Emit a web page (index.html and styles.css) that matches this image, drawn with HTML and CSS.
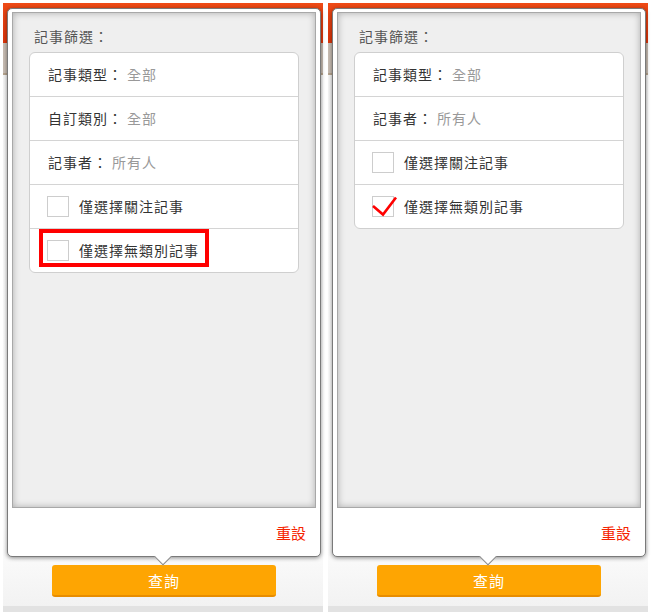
FILE: index.html
```html
<!DOCTYPE html>
<html lang="zh-Hant">
<head>
<meta charset="utf-8">
<link rel="stylesheet" href="styles.css">
</head>
<body>
<div class="pair">
  <div class="screen">
    <div class="hdr"></div>
    <div class="sub"></div>
    <div class="main"><button class="btn">查詢</button></div>
    <div class="strip"></div>
    <div class="popup">
      <div class="inner">
        <div class="title">記事篩選：</div>
        <div class="card">
          <div class="row"><span class="lbl">記事類型：</span><span class="val">全部</span></div>
          <div class="row"><span class="lbl">自訂類別：</span><span class="val">全部</span></div>
          <div class="row"><span class="lbl">記事者：</span><span class="val">所有人</span></div>
          <div class="row chk"><span class="box"></span><span class="lbl">僅選擇關注記事</span></div>
          <div class="row chk"><span class="box"></span><span class="lbl">僅選擇無類別記事</span><span class="mark"></span></div>
        </div>
      </div>
      <div class="pfoot"><span class="reset">重設</span></div>
    </div>
  </div>
  <div class="screen">
    <div class="hdr"></div>
    <div class="sub"></div>
    <div class="main"><button class="btn">查詢</button></div>
    <div class="strip"></div>
    <div class="popup">
      <div class="inner">
        <div class="title">記事篩選：</div>
        <div class="card">
          <div class="row"><span class="lbl">記事類型：</span><span class="val">全部</span></div>
          <div class="row"><span class="lbl">記事者：</span><span class="val">所有人</span></div>
          <div class="row chk"><span class="box"></span><span class="lbl">僅選擇關注記事</span></div>
          <div class="row chk"><span class="box checked"><svg class="tick" width="28" height="24" viewBox="0 0 28 24"><polyline points="1,10 11,18.5 24,1.5" fill="none" stroke="#f00" stroke-width="2.6" stroke-linejoin="miter" stroke-linecap="butt"/></svg></span><span class="lbl">僅選擇無類別記事</span></div>
        </div>
      </div>
      <div class="pfoot"><span class="reset">重設</span></div>
    </div>
  </div>
</div>
</body>
</html>
```

FILE: styles.css
```css
* { box-sizing: border-box; }
html, body { margin: 0; padding: 0; background: #fff; }
body {
  width: 659px;
  height: 612px;
  overflow: hidden;
  font-family: "Noto Sans CJK TC", "Noto Sans", sans-serif;
}
.pair {
  display: flex;
  gap: 5px;
  padding: 3px 0 0 3px;
}
.screen {
  position: relative;
  width: 320px;
  height: 609px;
  display: flex;
  flex-direction: column;
  background: linear-gradient(to right, #e6e6e6 0, #fbfbfb 5px, #fbfbfb 315px, #e6e6e6 320px);
}
.hdr {
  height: 40px;
  background: linear-gradient(#ee4a16, #dc340a);
}
.sub {
  height: 32px;
  background: #c9beb4;
  border-bottom: 2px solid #b7a58f;
}
.main {
  flex: 1;
  display: flex;
  flex-direction: column;
  justify-content: flex-end;
  align-items: center;
  padding-bottom: 9px;
  background: linear-gradient(#f6f6f6, #ffffff 85%, #f2f2f2);
}
.strip {
  height: 6px;
  background: #e2e2e2;
}
.btn {
  width: 224px;
  height: 32px;
  margin-left: 2px;
  border: 0;
  border-bottom: 2px solid #e88d00;
  border-radius: 3px;
  background: #fea502;
  color: #fff;
  font-family: inherit;
  font-size: 15px;
  letter-spacing: 1px;
  padding: 0;
}
.popup {
  position: absolute;
  top: 5px;
  left: 4px;
  width: 314px;
  height: 549px;
  display: flex;
  flex-direction: column;
  background: #fff;
  border: 1px solid #7a7a7a;
  border-radius: 5px;
  box-shadow: 0 1px 4px rgba(0,0,0,0.45);
  padding: 3px 4px 0;
}
.popup::after {
  content: "";
  position: absolute;
  left: 149px;
  bottom: -7px;
  width: 11px;
  height: 11px;
  background: #fff;
  border-right: 1px solid #8a8a8a;
  border-bottom: 1px solid #8a8a8a;
  transform: rotate(45deg);
}
.inner {
  flex: 1;
  background: #efefef;
  border: 1px solid #a8a8a8;
  box-shadow: inset 0 0 7px rgba(0,0,0,0.28);
  padding: 13px 16px 0;
}
.title {
  height: 20px;
  line-height: 20px;
  margin: 0 0 6px 5px;
  color: #555;
  font-size: 14px;
  letter-spacing: 1px;
}
.card {
  background: #fff;
  border: 1px solid #cfcfcf;
  border-radius: 6px;
}
.row {
  position: relative;
  height: 44px;
  display: flex;
  align-items: center;
  padding-left: 18px;
  padding-bottom: 2px;
  border-top: 1px solid #d4d4d4;
  font-size: 14px;
  letter-spacing: 1px;
}
.row:first-child {
  height: 43px;
  border-top: 0;
}
.lbl { color: #333; }
.val { color: #999; margin-left: 4px; }
.chk { padding-left: 17px; padding-bottom: 0; }
.chk .lbl { margin-top: -2px; }
.box {
  position: relative;
  width: 22px;
  height: 21px;
  margin-right: 10px;
  border: 1px solid #cdcdcd;
  background: #fff;
}
.tick {
  position: absolute;
  left: -1px;
  top: -1px;
  overflow: visible;
}
.mark {
  position: absolute;
  left: 9px;
  top: 0;
  width: 170px;
  height: 38px;
  border: 4px solid #f00;
}
.pfoot {
  height: 48px;
  display: flex;
  align-items: center;
  justify-content: flex-end;
  padding-right: 10px;
}
.reset {
  color: #f52400;
  font-size: 15px;
}
```
